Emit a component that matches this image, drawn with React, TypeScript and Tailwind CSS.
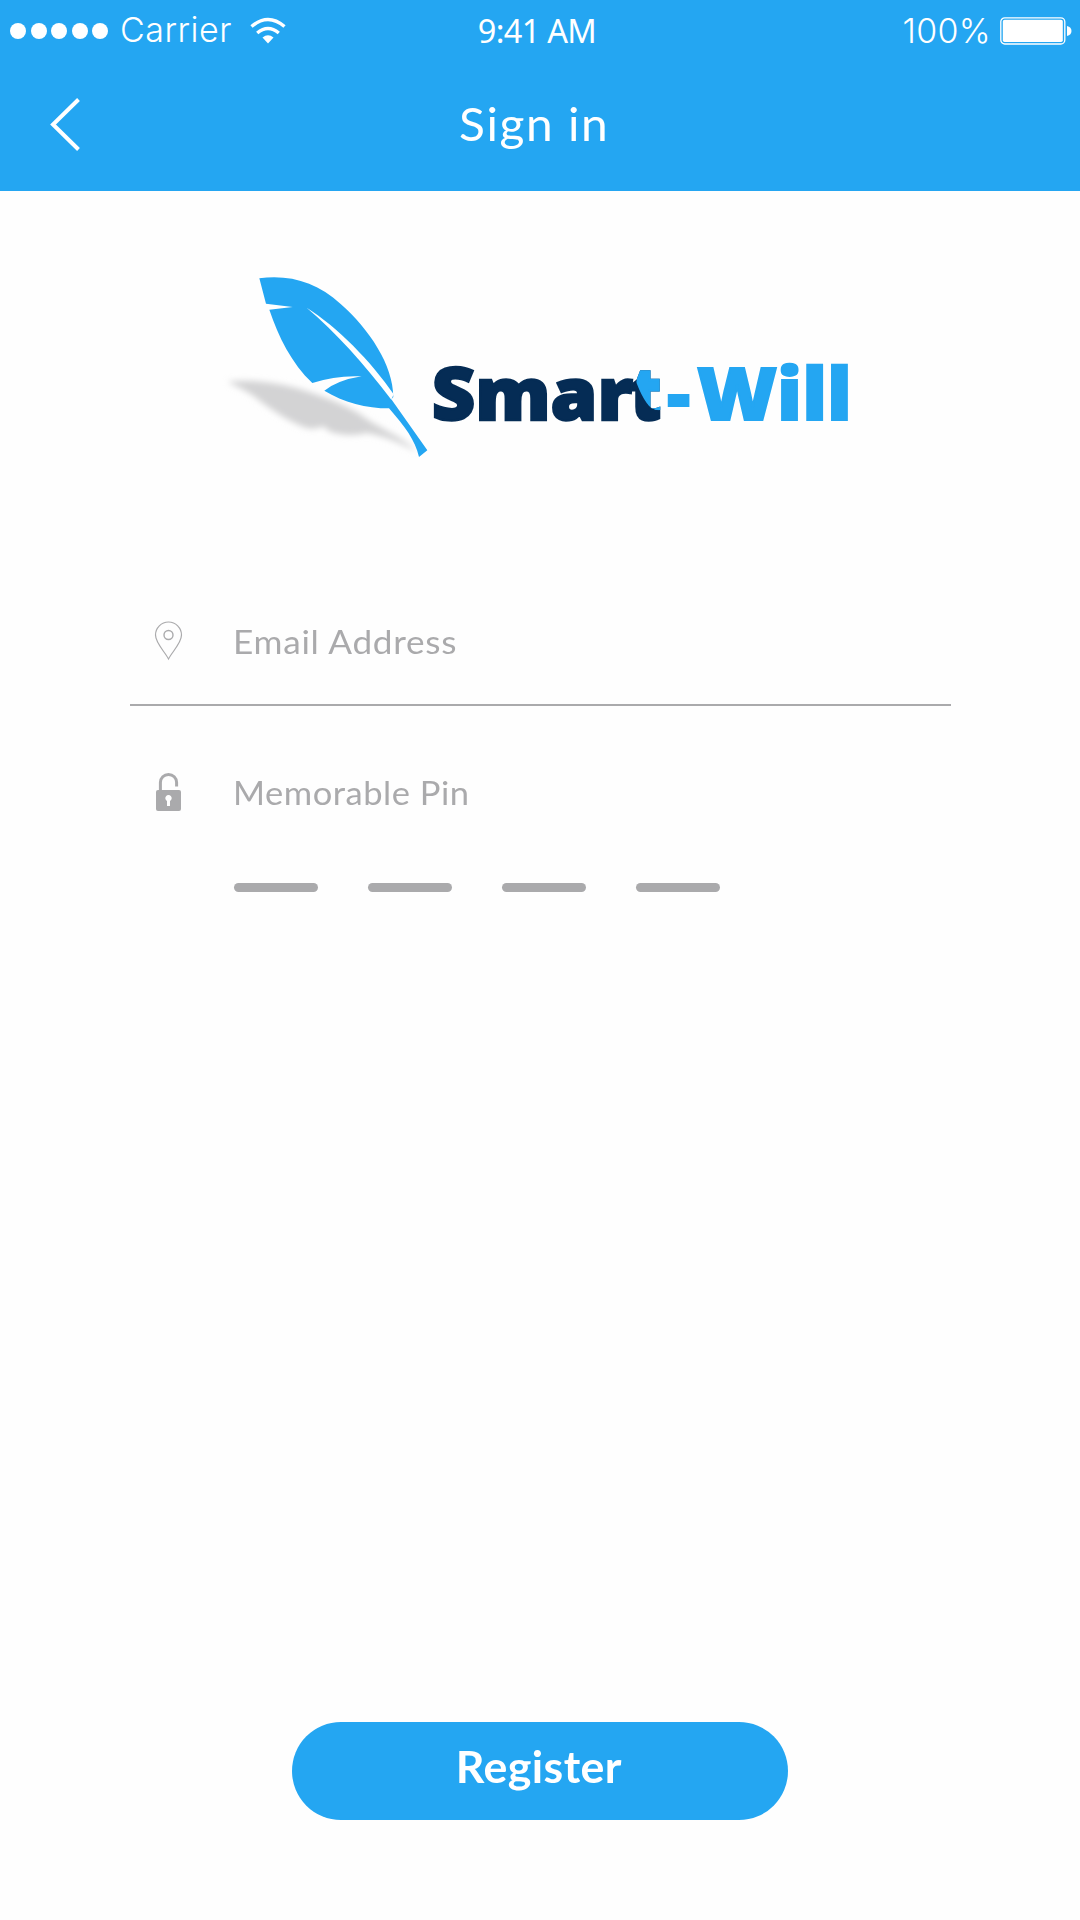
const wordmark = {
  fontFamily: "'Open Sans', 'Noto Sans', sans-serif",
  fontWeight: 800,
};

function StatusBar() {
  return (
    <div className="flex h-[62px] items-center text-white">
      <div className="flex flex-1 items-center pl-[10px]">
        <div className="flex gap-[4.5px]">
          {[0, 1, 2, 3, 4].map((i) => (
            <span key={i} className="size-4 rounded-full bg-white" />
          ))}
        </div>
        <span className="-mt-[2px] ml-[12px] w-[130px] font-['Inter'] text-[34px] leading-[60px] font-[360] tracking-[0.5px]">Carrier</span>
        <svg className="-mt-[1px]" width="36" height="28" viewBox="0 0 36 28" fill="none" stroke="white">
          <path d="M1.5 9.5Q18-4.5 34.5 9.5" strokeWidth="3.4" />
          <path d="M7.2 16Q18 7 28.8 16" strokeWidth="3.4" />
          <path d="M12.5 20.5Q18 16 23.5 20.5L18 26.5Z" fill="white" stroke="none" />
        </svg>
      </div>
      <span className="mr-[8px] -mt-[1px] font-['Noto_Sans'] text-[32.5px] leading-[60px] font-normal tracking-[-0.7px]">9:41 AM</span>
      <div className="flex flex-1 items-center justify-end pr-[8px]">
        <span className="-mt-[1px] mr-[9px] font-['Inter'] text-[34px] leading-[60px] font-[360] tracking-[0.3px]">100%</span>
        <svg width="72" height="28" viewBox="0 0 72 28" fill="white">
          <rect x="0.8" y="0.8" width="64" height="26.2" rx="4" fill="none" stroke="white" strokeWidth="1.3" />
          <rect x="2.8" y="2.8" width="60" height="22.2" rx="1.8" />
          <path d="M67 9Q71.5 10 71.5 14T67 19Z" />
        </svg>
      </div>
    </div>
  );
}

function Logo() {
  return (
    <svg className="ml-[220px] block" width="650" height="210" viewBox="0 0 1950 630">
      <defs>
        <filter id="soft" x="-20%" y="-30%" width="140%" height="160%">
          <feGaussianBlur stdDeviation="10" />
        </filter>
        <clipPath id="tLight">
          <path d="M1230 300H1330V433Q1302 444 1280 414Q1264 392 1250 355V300Z" />
        </clipPath>
      </defs>
      <path
        d="M22 350Q120 340 232 370C330 400 400 430 440 462C500 500 555 520 590 560C540 535 500 514 440 504Q390 518 330 500L310 484Q290 494 262 490C220 476 160 440 120 408Q96 385 22 350Z"
        fill="#d3d3d4"
        filter="url(#soft)"
      />
      <path d="M118 40C210 28 290 52 362 117C447 192 520 300 520 396L514 403L622 556L597 576C585 525 555 485 507 430C440 430 370 412 313 377Q355 345 425 334Q350 330 277 354C215 295 175 215 148 134L218 126L138 116Z" fill="#24a6f2" />
      <path d="M260 128C350 184 455 290 521 388L514 404C430 293 350 205 260 128Z" fill="white" />
      <g fill="#052c55" stroke="#052c55" strokeWidth="7" style={wordmark}>
        <text x="635" y="465" fontSize="220" textLength="604" lengthAdjust="spacingAndGlyphs">Smar</text>
        <text x="1230" y="465" fontSize="220" textLength="94" lengthAdjust="spacingAndGlyphs">t</text>
      </g>
      <text x="1230" y="465" fontSize="220" textLength="94" lengthAdjust="spacingAndGlyphs" fill="#24a6f2" stroke="#24a6f2" strokeWidth="7" clipPath="url(#tLight)" style={wordmark}>t</text>
      <g fill="#24a6f2" stroke="#24a6f2" strokeWidth="6" style={wordmark}>
        <text x="1342" y="465" fontSize="220" textLength="68" lengthAdjust="spacingAndGlyphs">-</text>
        <text x="1431" y="465" fontSize="218" textLength="465" lengthAdjust="spacingAndGlyphs">Will</text>
      </g>
    </svg>
  );
}

export default function App() {
  return (
    <div className="flex h-[1920px] w-[1080px] flex-col bg-[#fefefe] font-['Lato',sans-serif]">
      <header className="h-[191px] bg-[#24a6f2] text-white">
        <StatusBar />
        <div className="grid h-[129px] grid-cols-[1fr_auto_1fr] items-start">
          <svg className="mt-[34px] ml-[49px]" width="32" height="56" viewBox="0 0 32 56" fill="none" stroke="white" strokeWidth="4">
            <path d="M29.5 3.5L4 28.5L29.5 53.5" />
          </svg>
          <h1 className="-ml-[11px] scale-x-[1.04] pt-[32px] text-[46px] leading-[60px] tracking-[1.5px]">Sign in</h1>
        </div>
      </header>

      <main className="flex flex-1 flex-col pt-[74px]">
        <Logo />

        <form className="mr-[129px] ml-[130px] mt-[125px] text-[33.5px] text-[#aaaaac]">
          <div className="flex h-[106px] border-b-2 border-[#aaaaac]">
            <svg className="mt-[21px] ml-[24px]" width="29" height="40" viewBox="0 0 29 40" fill="none" stroke="#aaaaac">
              <path d="M14.5 38C11 31 1.5 22 1.5 14A13 13 0 0 1 27.5 14C27.5 22 18 31 14.5 38Z" strokeWidth="1.2" />
              <circle cx="14.5" cy="14" r="4.5" strokeWidth="1.4" />
            </svg>
            <span className="mt-[21px] ml-[50px] origin-left scale-x-[1.05] leading-[40px] tracking-[0.7px]">Email Address</span>
          </div>
          <div className="flex h-[177px]">
            <svg className="mt-[66px] ml-[25px]" width="27" height="40" viewBox="0 0 27 40">
              <path d="M5.4 20V10.5A8.1 8.1 0 0 1 21.6 10.5V14.5" fill="none" stroke="#aaaaac" strokeWidth="3" />
              <rect x="1" y="18" width="25" height="21" rx="2" fill="#aaaaac" />
              <path d="M12 34V29A3.2 3.2 0 1 1 15 29V34Z" fill="white" />
            </svg>
            <span className="mt-[66px] ml-[51px] origin-left scale-x-[1.03] leading-[40px] tracking-[0.5px]">Memorable Pin</span>
          </div>
          <div className="ml-[104px] flex gap-[50px]">
            {[0, 1, 2, 3].map((i) => (
              <span key={i} className="h-[9px] w-[84px] rounded-full bg-[#aaaaac]" />
            ))}
          </div>
        </form>

        <button className="mx-auto mt-auto mb-[100px] h-[98px] w-[496px] rounded-full bg-[#24a6f2] pr-[2px] pb-[8px] text-[43px] font-bold text-white">
          <span className="inline-block scale-x-[1.04] tracking-[0.4px]">Register</span>
        </button>
      </main>
    </div>
  );
}
